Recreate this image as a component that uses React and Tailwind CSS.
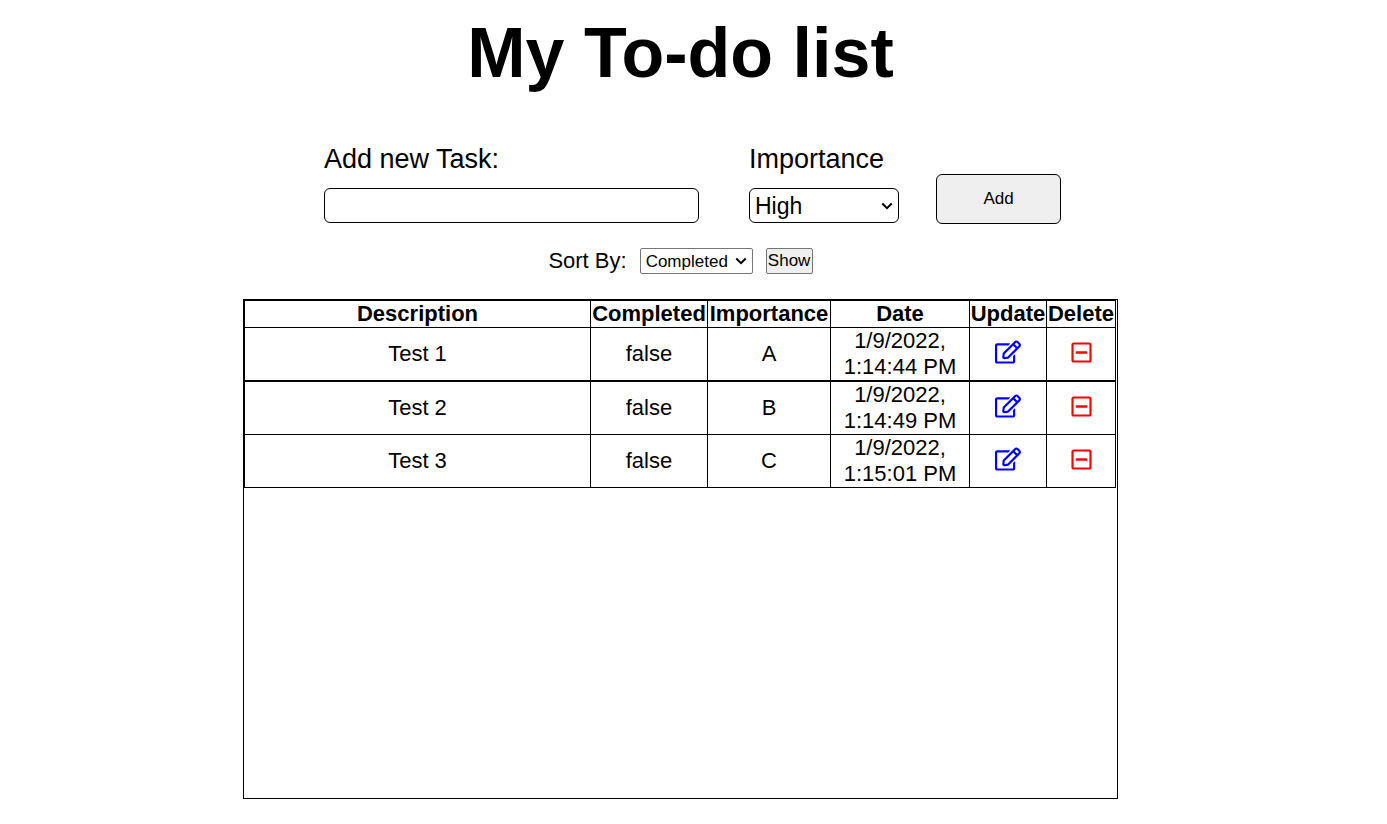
import { FaRegEdit, FaRegMinusSquare } from 'react-icons/fa';

const columns = ['Description', 'Completed', 'Importance', 'Date', 'Update', 'Delete'];

const tasks = [
  { name: 'Test 1', completed: 'false', importance: 'A', date: '1/9/2022, 1:14:44 PM' },
  { name: 'Test 2', completed: 'false', importance: 'B', date: '1/9/2022, 1:14:49 PM' },
  { name: 'Test 3', completed: 'false', importance: 'C', date: '1/9/2022, 1:15:01 PM' },
];

function Select({ id, options, className }) {
  return (
    <div className="relative flex">
      <select id={id} className={`w-full appearance-none border bg-white pl-[5px] ${className}`}>
        {options.map((o) => (
          <option key={o}>{o}</option>
        ))}
      </select>
      <svg viewBox="0 0 12 8" className="pointer-events-none absolute inset-y-0 right-[6px] my-auto h-2 w-3" aria-hidden="true">
        <path d="M1.3 1.5 L6 6.2 L10.7 1.5" fill="none" stroke="black" strokeWidth="2" />
      </svg>
    </div>
  );
}

export default function App() {
  return (
    <main className="pt-[13px] pr-[26px] pb-6 font-['Liberation_Sans',Arial,sans-serif] text-black">
      <h1 className="text-center text-[70px] leading-[80px] font-bold">My To-do list</h1>

      <div className="mx-auto mt-[50px] flex max-w-[875px] flex-col items-center">
        <form className="ml-6 flex items-end">
          <div className="flex flex-col gap-[13px] pb-px">
            <label htmlFor="task" className="text-[27px] leading-8">Add new Task:</label>
            <input id="task" type="text" className="h-[35px] w-[375px] rounded-md border border-black px-1 text-[22px]" />
          </div>
          <div className="ml-[50px] flex w-[150px] flex-col gap-[13px] pb-px">
            <label htmlFor="importance" className="text-[27px] leading-8">Importance</label>
            <Select id="importance" options={['High', 'Medium', 'Low']} className="h-[35px] rounded-md border-black pb-px text-[23px]" />
          </div>
          <button type="button" className="ml-[37px] h-[50px] w-[125px] rounded-md border border-black bg-[#efefef] text-[17px]">Add</button>
        </form>

        <div className="mt-6 flex items-center gap-[13px]">
          <label htmlFor="sort" className="text-[22px] leading-[26px]">Sort By:</label>
          <div className="w-[113px]">
            <Select id="sort" options={['Completed', 'Importance', 'Date']} className="h-[26px] rounded-xs border-[#767676] pb-px text-[17px]" />
          </div>
          <button type="button" className="h-[26px] w-[47px] rounded-xs border border-[#767676] bg-[#efefef] pb-px text-[17px] leading-5">Show</button>
        </div>

        <section className="mt-[25px] min-h-[500px] w-full border border-black pr-px">
          <table className="w-full table-fixed border-collapse text-center text-[22px] leading-[26px]">
            <colgroup>
              <col />
              <col className="w-[117px]" />
              <col className="w-[123px]" />
              <col className="w-[139px]" />
              <col className="w-[77px]" />
              <col className="w-[69px]" />
            </colgroup>
            <thead>
              <tr>
                {columns.map((c) => (
                  <th key={c} className="border border-black p-0 font-bold">{c}</th>
                ))}
              </tr>
            </thead>
            <tbody>
              {tasks.map((t) => (
                <tr key={t.name} className="first:border-b-2 first:border-black">
                  <td className="border border-black p-0">{t.name}</td>
                  <td className="border border-black p-0">{t.completed}</td>
                  <td className="border border-black p-0">{t.importance}</td>
                  <td className="border border-black px-2 py-0">{t.date}</td>
                  <td className="border border-black px-0 pt-0 pb-1">
                    <button type="button" aria-label={`Update ${t.name}`} className="mx-auto block text-[#0000ff]">
                      <FaRegEdit size={26} />
                    </button>
                  </td>
                  <td className="border border-black px-0 pt-0 pb-1">
                    <button type="button" aria-label={`Delete ${t.name}`} className="mx-auto block text-[#ff0000]">
                      <FaRegMinusSquare size={23} />
                    </button>
                  </td>
                </tr>
              ))}
            </tbody>
          </table>
        </section>
      </div>
    </main>
  );
}
